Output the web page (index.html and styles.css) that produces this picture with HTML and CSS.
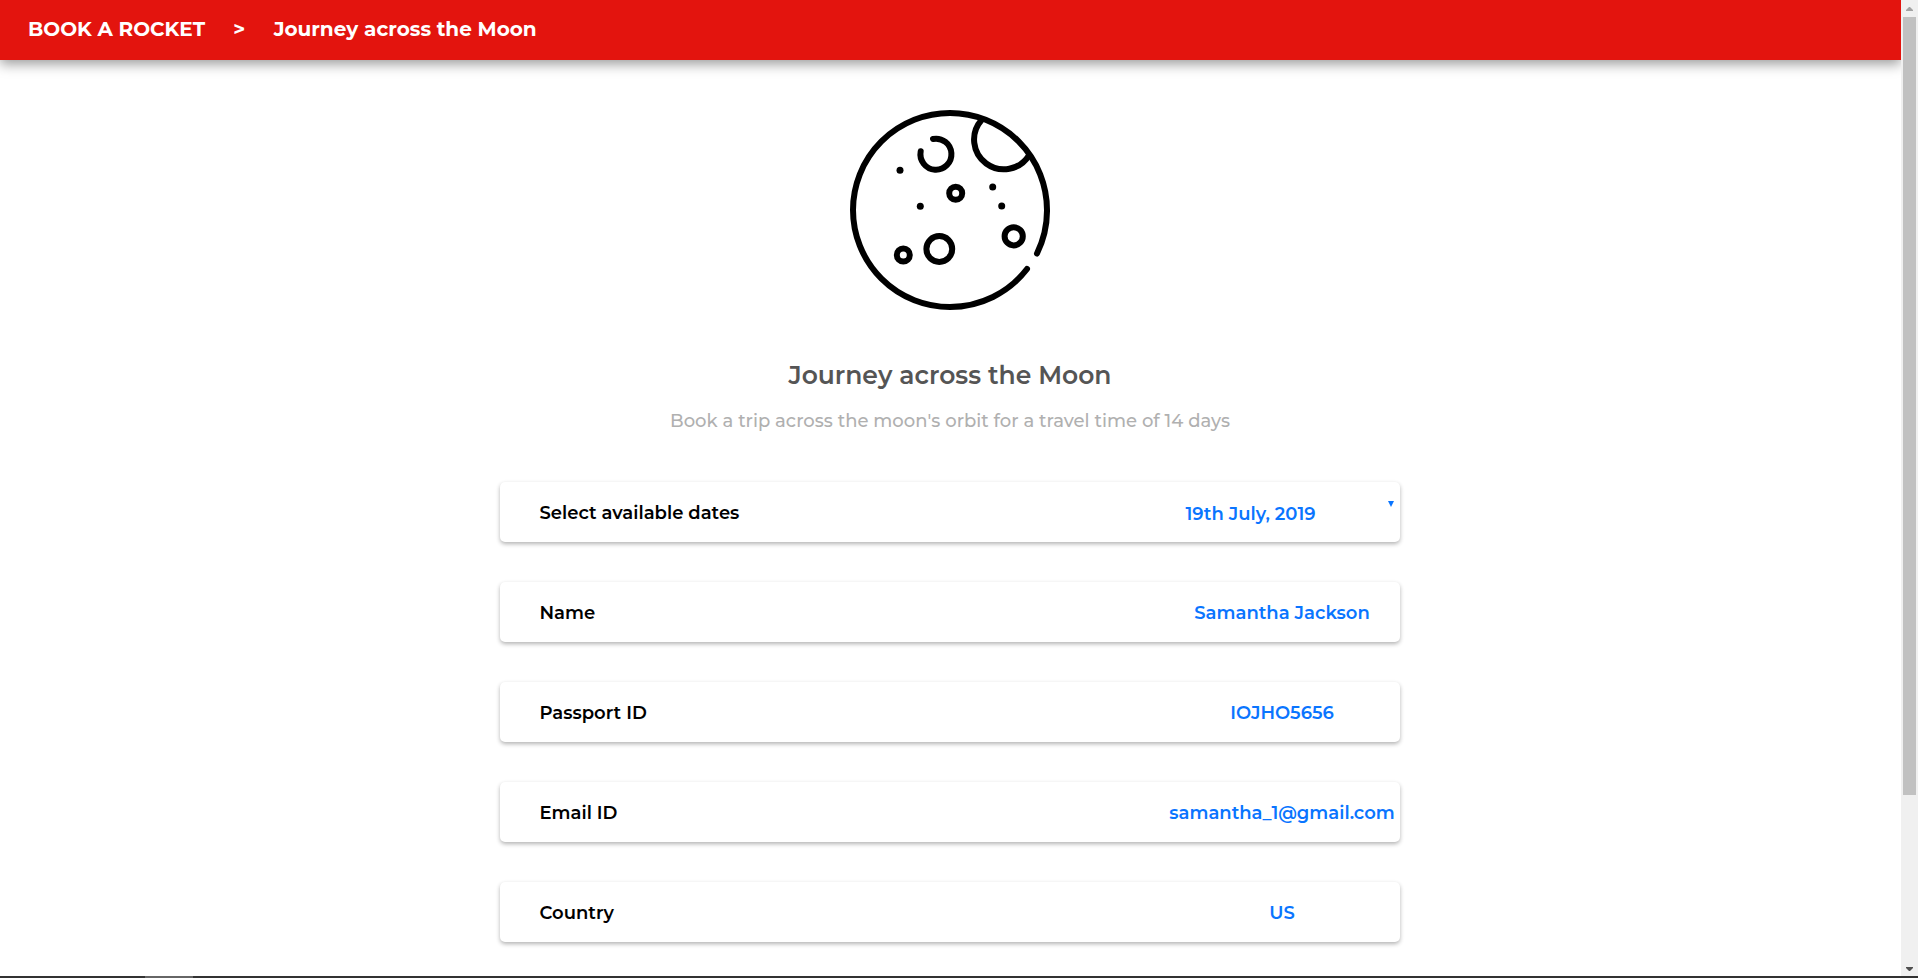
FILE: index.html
```html
<!DOCTYPE html>
<html lang="en">
<head>
<meta charset="utf-8">
<title>Book a Rocket</title>
<link rel="stylesheet" href="styles.css">
</head>
<body>
<div class="screen">
  <div class="page">
    <header class="topbar"><span>BOOK A ROCKET</span><span class="separator">&gt;</span><span>Journey across the Moon</span></header>
    <main class="content">
      <svg class="moon" viewBox="0 0 200 200" fill="none" stroke="#000" stroke-width="6" stroke-linecap="round">
        <path d="M177 159A97 97 0 0 1 100 197A97 97 0 0 1 3 100A97 97 0 0 1 100 3A97 97 0 0 1 197 100A97 97 0 0 1 187 143.500"/>
        <path d="M131.300 10.200A29.700 29.700 0 1 0 179 45.300"/>
        <path d="M83 29A15.500 15.500 0 1 1 70.700 41.300"/>
        <circle cx="105.700" cy="83.300" r="6.500"/>
        <circle cx="89.300" cy="139" r="12.900"/>
        <circle cx="163.700" cy="126.300" r="9.100"/>
        <circle cx="53.300" cy="145" r="6.500"/>
        <g fill="#000" stroke="none"><circle cx="50" cy="60.300" r="3.500"/><circle cx="70.300" cy="96.300" r="3.500"/><circle cx="142.700" cy="77" r="3.500"/><circle cx="151.700" cy="96" r="3.500"/></g>
      </svg>
      <h1 class="title">Journey across the Moon</h1>
      <p class="subtitle">Book a trip across the moon's orbit for a travel time of 14 days</p>
      <div class="fields">
        <div class="field"><span class="label">Select available dates</span><span class="value value-select">19th July, 2019<svg class="caret" viewBox="0 0 6 6"><path d="M0 0h6L3 6z" fill="#0a75ff"/></svg></span></div>
        <div class="field"><span class="label">Name</span><span class="value">Samantha Jackson</span></div>
        <div class="field"><span class="label">Passport ID</span><span class="value">IOJHO5656</span></div>
        <div class="field"><span class="label">Email ID</span><span class="value">samantha_1@gmail.com</span></div>
        <div class="field"><span class="label">Country</span><span class="value">US</span></div>
      </div>
    </main>
  </div>
  <div class="scrollbar">
    <svg class="up" viewBox="0 0 7 4"><path d="M0 4V3L3 0h1l3 3v1z" fill="#a3a3a3"/></svg>
    <div class="thumb"></div>
    <svg class="down" viewBox="0 0 7 4"><path d="M0 0v1l3 3h1l3-3V0z" fill="#505050"/></svg>
  </div>
</div>
<div class="taskbar"><div class="active"></div></div>
</body>
</html>
```
FILE: styles.css
```css
* { box-sizing: border-box; }
body { margin: 0; height: 978px; overflow: hidden; background: #fff; font-family: Montserrat, Inter, sans-serif; display: flex; flex-direction: column; }
.screen { flex: 1; display: flex; min-height: 0; }
.page { flex: 1; overflow: hidden; }
.topbar { height: 60px; padding: 0 0 2px 28px; display: flex; align-items: center; background: #e3140e; color: #fff; font-size: 20px; font-weight: 700; box-shadow: 0 4px 12px rgba(0,0,0,.4); white-space: nowrap; }
.separator { margin: 0 28.500px 0 28px; }
.content { display: flex; flex-direction: column; align-items: center; padding: 50px 1px 0 0; }
.moon { width: 200px; height: 200px; display: block; }
.title { margin: 48px 0 0; height: 36px; line-height: 34px; font-size: 25px; font-weight: 600; color: #555; white-space: nowrap; }
.subtitle { margin: 13px 0 0; height: 28px; line-height: 28px; font-size: 18px; letter-spacing: .015px; color: #b0b0b0; font-weight: 500; white-space: nowrap; }
.fields { margin-top: 47px; width: 900px; display: grid; gap: 40px; }
.field { height: 60px; display: flex; align-items: center; justify-content: space-between; padding: 2px 0 0 39.500px; border-radius: 5px; box-shadow: 0 2px 4px rgba(0,0,0,.3); font-size: 18px; font-weight: 600; white-space: nowrap; }
.value { width: 236px; display: flex; justify-content: center; color: #0a75ff; }
.value-select { position: relative; padding: 2px 63px 0 0; }
.caret { position: absolute; width: 6px; height: 6px; right: 6px; top: 0; }
.scrollbar { width: 17px; background: #f0f0f0; display: flex; flex-direction: column; align-items: center; padding: 7px 0 5px; }
.up, .down { width: 7px; height: 4px; }
.thumb { width: 13px; height: 778px; margin-top: 6px; background: #c1c1c1; }
.down { margin-top: auto; }
.taskbar { height: 2px; background: #333; padding-left: 145px; }
.active { width: 48px; height: 2px; background: #666; }
```
